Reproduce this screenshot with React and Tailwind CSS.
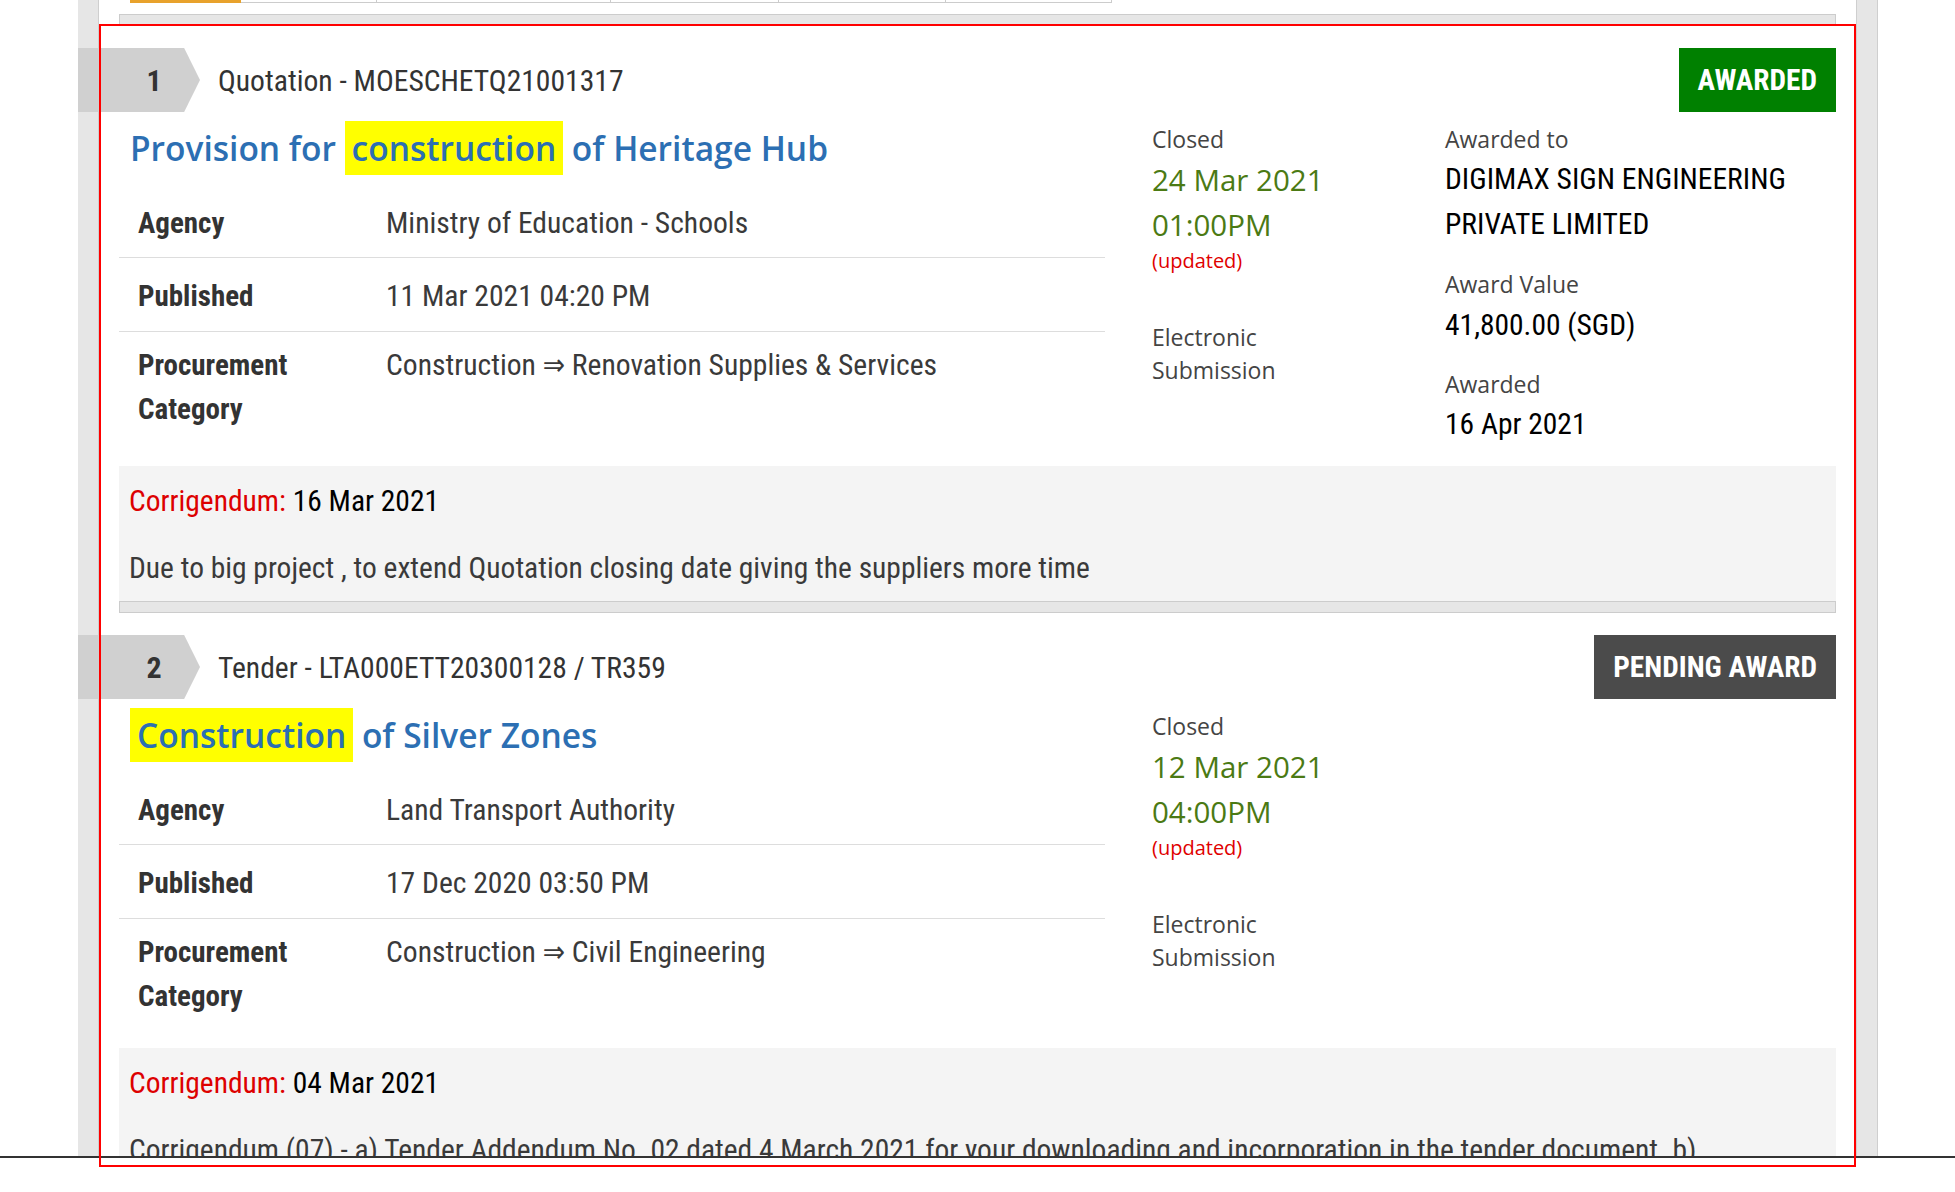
const COND = "font-['Roboto_Condensed','Liberation_Sans_Narrow','DejaVu_Sans_Condensed',sans-serif]";
const OPEN = "font-['Open_Sans','Noto_Sans',sans-serif]";

const tabs = [
  { width: "w-[111px]", active: true },
  { width: "w-[136px]" },
  { width: "w-[234px]" },
  { width: "w-[168px]" },
  { width: "w-[167px]" },
  { width: "w-[166px]" },
];

const notices = [
  {
    no: 1,
    ref: "Quotation - MOESCHETQ21001317",
    status: "AWARDED",
    statusClass: "bg-[#008000]",
    title: ["Provision for ", "construction", " of Heritage Hub"],
    agency: "Ministry of Education - Schools",
    published: "11 Mar 2021 04:20 PM",
    category: "Construction ⇒ Renovation Supplies & Services",
    closedDate: "24 Mar 2021",
    closedTime: "01:00PM",
    award: {
      to: ["DIGIMAX SIGN ENGINEERING", "PRIVATE LIMITED"],
      value: "41,800.00 (SGD)",
      date: "16 Apr 2021",
    },
    corrigendumDate: "16 Mar 2021",
    corrigendumText:
      "Due to big project , to extend Quotation closing date giving the suppliers more time",
  },
  {
    no: 2,
    ref: "Tender - LTA000ETT20300128 / TR359",
    status: "PENDING AWARD",
    statusClass: "bg-[#4b4b4b]",
    title: ["", "Construction", " of Silver Zones"],
    agency: "Land Transport Authority",
    published: "17 Dec 2020 03:50 PM",
    category: "Construction ⇒ Civil Engineering",
    closedDate: "12 Mar 2021",
    closedTime: "04:00PM",
    award: null,
    corrigendumDate: "04 Mar 2021",
    corrigendumText:
      "Corrigendum (07) - a) Tender Addendum No. 02 dated 4 March 2021 for your downloading and incorporation in the tender document. b)",
  },
];

function Strip() {
  return <div className="h-[12px] border border-[#cccccc] bg-[#e6e6e6]" />;
}

// padding differs a little per row in the original table
function DetailRow({ label, children, pad, last }) {
  return (
    <div
      className={`grid grid-cols-[248px_1fr] px-[19px] text-[29.6px] leading-[44px] text-[#3a3a3a] ${pad} ${
        last ? "" : "border-b border-[#dddddd]"
      }`}
    >
      <div className="text-[29px] font-bold text-[#333333]">{label}</div>
      <div>{children}</div>
    </div>
  );
}

function Notice({ item }) {
  const [before, hit, after] = item.title;
  return (
    <section className="pt-[22px]">
      <div className="flex h-[64px] items-center justify-between">
        <div className="flex items-center">
          <div
            className={`-ml-[41px] flex h-[64px] w-[122px] items-center justify-center bg-[#d0d0d0] pl-[30px] text-[30px] font-bold text-[#333333] ${COND} [clip-path:polygon(0_0,87%_0,100%_50%,87%_100%,0_100%)]`}
          >
            {item.no}
          </div>
          <div className={`ml-[18px] pt-[2px] text-[29.6px] text-[#333333] ${COND}`}>{item.ref}</div>
        </div>
        <div
          className={`flex h-[64px] items-center px-[19px] pt-[1px] text-[29.3px] font-bold text-white ${COND} ${item.statusClass}`}
        >
          {item.status}
        </div>
      </div>

      <div className="mt-[9px] flex">
        <div className={`w-[986px] shrink-0 pb-[12px] ${COND}`}>
          <h2 className={`h-[54px] pl-[11px] text-[33.5px] font-semibold leading-[54px] text-[#2c6fb3] ${OPEN}`}>
            {before}
            <span className="inline-block bg-[#ffff00] px-[7px]">{hit}</span>
            {after}
          </h2>
          <div className="mt-[9px]">
            <DetailRow label="Agency" pad="pt-[17px] pb-[12px]">
              {item.agency}
            </DetailRow>
            <DetailRow label="Published" pad="pt-[16px] pb-[13px]">
              {item.published}
            </DetailRow>
            <DetailRow label={<>Procurement<br />Category</>} pad="pt-[11px] pb-[18px]" last>
              {item.category}
            </DetailRow>
          </div>
        </div>

        <div className="flex flex-1 pl-[47px] pt-[2px]">
          <div className={`w-[293px] shrink-0 ${OPEN}`}>
            <div className="text-[23px] leading-[33px] text-[#444444]">Closed</div>
            <div className="mt-[1px] text-[29.5px] leading-[45px] text-[#4b7a14]">{item.closedDate}</div>
            <div className="text-[29.5px] leading-[45px] text-[#4b7a14]">{item.closedTime}</div>
            <div className="mt-[1px] text-[20px] leading-[26px] text-[#e00000]">(updated)</div>
            <div className="mt-[47px] text-[23px] leading-[33px] text-[#444444]">
              Electronic
              <br />
              Submission
            </div>
          </div>
          {item.award && (
            <div className="flex-1 pb-[19px]">
              <div className={`text-[23px] leading-[33px] text-[#444444] ${OPEN}`}>Awarded to</div>
              <div className={`mt-[1px] text-[29.5px] leading-[45px] text-black ${COND}`}>
                {item.award.to[0]}
                <br />
                {item.award.to[1]}
              </div>
              <div className={`mt-[21px] text-[23px] leading-[33px] text-[#444444] ${OPEN}`}>Award Value</div>
              <div className={`mt-[2px] text-[29.5px] leading-[45px] text-black ${COND}`}>{item.award.value}</div>
              <div className={`mt-[20px] text-[23px] leading-[33px] text-[#444444] ${OPEN}`}>Awarded</div>
              <div className={`mt-[1px] text-[29.5px] leading-[45px] text-black ${COND}`}>{item.award.date}</div>
            </div>
          )}
        </div>
      </div>

      <div className={`bg-[#f4f4f4] px-[10px] pb-[11px] pt-[13px] text-[29.5px] leading-[44px] ${COND}`}>
        <p>
          <span className="text-[#dd0000]">Corrigendum:</span>{" "}
          <span className="text-black">{item.corrigendumDate}</span>
        </p>
        <p className="mt-[23px] whitespace-nowrap text-[#3a3a3a]">{item.corrigendumText}</p>
      </div>
      <Strip />
    </section>
  );
}

export default function App() {
  return (
    <div className="relative h-[1192px] w-[1955px] overflow-hidden bg-white">
      <div className="h-[1156px] overflow-hidden">
        <div className="ml-[78px] flex h-full w-[1800px]">
          <div className="w-[21px] shrink-0 border-r border-[#cfcfcf] bg-[#e6e6e6]" />
          <main className="w-[1757px] shrink-0 px-[20px]">
            <div className="ml-[11px] flex h-[3px]">
              {tabs.map((tab, i) => (
                <div
                  key={i}
                  className={`${tab.width} h-[3px] ${
                    tab.active ? "bg-[#e8a22c]" : "border-b border-r border-[#cccccc] bg-white"
                  }`}
                />
              ))}
            </div>
            <div className="mt-[11px]">
              <Strip />
            </div>
            {notices.map((item) => (
              <Notice key={item.no} item={item} />
            ))}
          </main>
          <div className="w-[22px] shrink-0 border-x border-[#cfcfcf] bg-[#e6e6e6]" />
        </div>
      </div>
      <div className="h-[2px] bg-[#333333]" />
      <div className="pointer-events-none absolute left-[99px] top-[24px] h-[1143px] w-[1757px] border-2 border-[#ff0000]" />
    </div>
  );
}
